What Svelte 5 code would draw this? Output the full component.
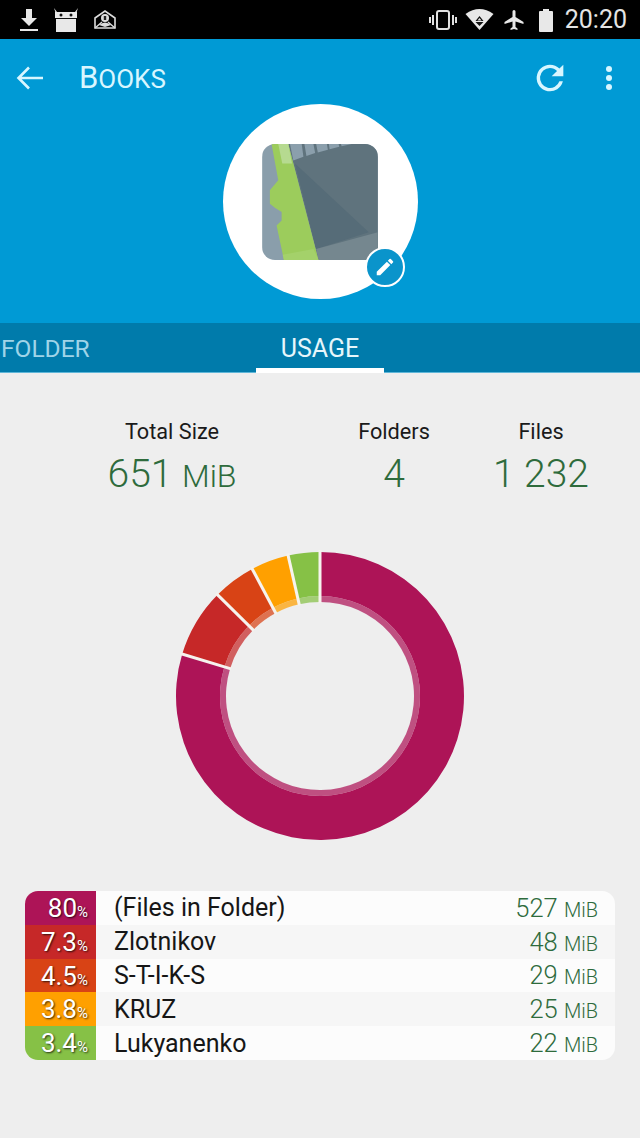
<script>
  const rows = [
    { pct: '80', arc: 0.797, name: '(Files in Folder)', size: '527', color: '#ad1457' },
    { pct: '7.3', arc: 0.077, name: 'Zlotnikov', size: '48', color: '#c62828' },
    { pct: '4.5', arc: 0.048, name: 'S-T-I-K-S', size: '29', color: '#d84315' },
    { pct: '3.8', arc: 0.0425, name: 'KRUZ', size: '25', color: '#ffa000' },
    { pct: '3.4', arc: 0.0355, name: 'Lukyanenko', size: '22', color: '#86c146' }
  ];

  const stats = [
    { label: 'Total Size', value: '651', unit: 'MiB' },
    { label: 'Folders', value: '4' },
    { label: 'Files', value: '1 232' }
  ];

  const CX = 150;
  const CY = 150;

  function coords(r, frac) {
    const a = frac * Math.PI * 2 - Math.PI / 2;
    return [(CX + r * Math.cos(a)).toFixed(2), (CY + r * Math.sin(a)).toFixed(2)];
  }

  function wedge(r0, r1, from, to) {
    const large = to - from > 0.5 ? 1 : 0;
    const a = coords(r1, from).join(' ');
    const b = coords(r1, to).join(' ');
    const c = coords(r0, to).join(' ');
    const d = coords(r0, from).join(' ');
    return `M${a} A${r1} ${r1} 0 ${large} 1 ${b} L${c} A${r0} ${r0} 0 ${large} 0 ${d} Z`;
  }

  let cum = 0;
  const segments = rows.map((row) => {
    const from = cum;
    cum += row.arc;
    return { color: row.color, from, to: cum, a: coords(93, from), b: coords(146, from) };
  });
</script>

<div class="page">
  <div class="status">
    <div class="status-left">
      <svg width="20" height="24" viewBox="0 0 20 24"><path d="M7 1h6v9h5l-8 8-8-8h5z" fill="#e8e8e8"/><rect x="1" y="21" width="18" height="2" fill="#e8e8e8"/></svg>
      <svg width="26" height="26" viewBox="0 0 26 26"><path d="M1 1l3 4h18l3-4-2 6v18H3V7z" fill="#e8e8e8"/><rect x="2" y="5" width="22" height="6" fill="#e8e8e8"/><circle cx="8" cy="8" r="1.5" fill="#111"/><circle cx="18" cy="8" r="1.5" fill="#111"/><rect x="3" y="11" width="20" height="1" fill="#111"/></svg>
      <svg width="24" height="22" viewBox="0 0 24 22"><path d="M2 9l10-7 10 7v10H2z" fill="none" stroke="#ddd" stroke-width="1.6"/><path d="M2 19l7-6M22 19l-7-6" stroke="#ddd" stroke-width="1.4"/><circle cx="12" cy="9" r="4" fill="#ddd"/><rect x="10.8" y="7" width="2.4" height="4" fill="#222"/><path d="M6 16q6-5 12 0l-6 2z" fill="#ddd"/></svg>
    </div>
    <div class="status-right">
      <svg width="28" height="22" viewBox="0 0 28 22"><rect x="8" y="2" width="12" height="18" rx="2" fill="none" stroke="#e0e0e0" stroke-width="2"/><path d="M4 6v10M1 8v6M24 6v10M27 8v6" stroke="#e0e0e0" stroke-width="2"/></svg>
      <svg width="29" height="22" viewBox="0 0 28 22"><path d="M0 5q14-10 28 0L14 21z" fill="#e8e8e8"/><path d="M14 7l-4 5h8zM10 13h8l-4 4z" fill="#111"/><path d="M14 9l-2 2.500h4z" fill="#e8e8e8"/></svg>
      <svg width="24" height="24" viewBox="0 0 24 24"><path d="M21 16v-2l-8-5V3.500a1.500 1.500 0 0 0-3 0V9l-8 5v2l8-2.500V19l-2 1.500V22l3.500-1 3.500 1v-1.500L13 19v-5.500z" fill="#e8e8e8" transform="translate(0.500 0)"/></svg>
      <svg class="battery" width="16" height="24" viewBox="0 0 16 24"><path d="M5 1h6v2h3a1 1 0 0 1 1 1v19a1 1 0 0 1-1 1H2a1 1 0 0 1-1-1V4a1 1 0 0 1 1-1h3z" fill="#e8e8e8"/></svg>
      <span class="time">20:20</span>
    </div>
  </div>

  <header class="hero">
    <div class="toolbar">
      <svg class="back" width="28" height="28" viewBox="0 0 28 28"><path d="M27 14H3M13 3.500L2.500 14 13 24.500" fill="none" stroke="#d8f6ff" stroke-width="2.600"/></svg>
      <h1>Books</h1>
      <svg class="refresh" width="40" height="40" viewBox="0 0 24 24"><path d="M17.650 6.350A8 8 0 0 0 12 4a8 8 0 1 0 7.730 10h-2.080A6 6 0 1 1 12 6c1.660 0 3.140.69 4.220 1.780L13 11h7V4z" fill="#d8f6ff"/></svg>
      <svg width="8" height="26" viewBox="0 0 8 26"><circle cx="4" cy="4" r="3" fill="#d8f6ff"/><circle cx="4" cy="13" r="3" fill="#d8f6ff"/><circle cx="4" cy="22" r="3" fill="#d8f6ff"/></svg>
    </div>
    <div class="avatar">
      <svg class="cover" width="116" height="116" viewBox="157 132 345 346">
        <rect x="157" y="132" width="345" height="346" fill="#8a9eab"/>
        <path d="M235 132H502V478H325z" fill="#5f737d"/>
        <path d="M255 190L475 395L318 445z" fill="#566c78"/>
        <path d="M318 445L502 395V478H325z" fill="#75878f"/>
        <path d="M240 132h35l5 38-30 11zM283 132h27l5 27-26 9zM318 132h32l3 17-30 8zM356 132h29l2 8-29 8zM392 132h32l-30 7z" fill="#8b9fac"/>
        <path d="M185 132H235L325 478H222L200 375L215 360V335L195 322L180 310V270L205 240z" fill="#9ccc5c"/>
        <path d="M205 132H235L246 190H217z" fill="#b6da90"/>
        <path d="M222 478L218 462L310 445L325 478z" fill="#a4d16a"/>
      </svg>
      <div class="edit">
        <svg width="22" height="22" viewBox="0 0 24 24"><path d="M3 17.250V21h3.750L17.810 9.940l-3.750-3.750zM20.710 7.040a1 1 0 0 0 0-1.410l-2.340-2.340a1 1 0 0 0-1.410 0l-1.830 1.830 3.750 3.750z" fill="#fff"/></svg>
      </div>
    </div>
  </header>

  <nav class="tabs">
    <div class="tab dim">FOLDER</div>
    <div class="tab active">USAGE</div>
  </nav>

  <main class="content">
    <section class="stats">
      {#each stats as stat}
        <div class="stat">
          <div class="stat-label">{stat.label}</div>
          <div class="stat-value">{stat.value}{#if stat.unit}{' '}<span class="stat-unit">{stat.unit}</span>{/if}</div>
        </div>
      {/each}
    </section>

    <svg class="donut" width="300" height="300" viewBox="0 0 300 300">
      {#each segments as seg}
        <path d={wedge(100, 144, seg.from, seg.to)} fill={seg.color} />
        <path d={wedge(94, 100, seg.from, seg.to)} fill={seg.color} opacity="0.72" />
      {/each}
      {#each segments as seg}
        <line x1={seg.a[0]} y1={seg.a[1]} x2={seg.b[0]} y2={seg.b[1]} stroke="#f6f3ee" stroke-width="3" />
      {/each}
    </svg>

    <section class="legend">
      {#each rows as row}
        <div class="row">
          <div class="swatch" style="background: {row.color}">{row.pct}<small>%</small></div>
          <div class="name">{row.name}</div>
          <div class="size">{row.size} <small>MiB</small></div>
        </div>
      {/each}
    </section>
  </main>
</div>

<style>
  :global(body) {
    margin: 0;
    background: #eeeeee;
  }

  .page {
    width: 640px;
    height: 1138px;
    overflow: hidden;
    display: flex;
    flex-direction: column;
    font-family: Roboto, "Liberation Sans", sans-serif;
    background: #eeeeee;
  }

  .status {
    height: 39px;
    flex: none;
    background: #000;
    display: flex;
    align-items: center;
    justify-content: space-between;
    padding: 0 13px 0 19px;
    box-sizing: border-box;
  }

  .status-left,
  .status-right {
    display: flex;
    align-items: center;
  }

  .status-left {
    gap: 14px;
  }

  .status-right {
    gap: 8px;
  }

  .battery {
    margin-left: 4px;
  }

  .time {
    font-size: 25px;
    color: #e4e4e4;
    margin-left: 3px;
  }

  .hero {
    height: 284px;
    flex: none;
    background: #009ad5;
    display: flex;
    flex-direction: column;
    align-items: center;
  }

  .toolbar {
    width: 100%;
    height: 65px;
    flex: none;
    box-sizing: border-box;
    padding: 12px 27px 0 16px;
    display: flex;
    align-items: center;
  }

  h1 {
    margin: 0 0 0 35px;
    flex: 1;
    font-size: 26px;
    font-weight: 400;
    text-transform: uppercase;
    color: #d8f6ff;
  }

  h1::first-letter {
    font-size: 31px;
  }

  .refresh {
    margin-right: 35px;
  }

  .avatar {
    width: 195px;
    height: 195px;
    border-radius: 50%;
    background: #fff;
    position: relative;
    display: flex;
    align-items: center;
    justify-content: center;
  }

  .cover {
    border-radius: 13px;
  }

  .edit {
    position: absolute;
    left: 142px;
    top: 143px;
    width: 36px;
    height: 36px;
    border: 2px solid #fff;
    border-radius: 50%;
    background: #0a94cb;
    display: flex;
    align-items: center;
    justify-content: center;
  }

  .tabs {
    height: 50px;
    flex: none;
    box-sizing: border-box;
    background: #007bab;
    border-bottom: 1px solid #5fb6d8;
    display: flex;
  }

  .tab {
    font-size: 25px;
    line-height: 51px;
    height: 50px;
    box-sizing: border-box;
    text-align: center;
  }

  .tab.dim {
    width: 256px;
    padding-left: 1px;
    text-align: left;
    font-size: 24.500px;
    color: #9fd4e8;
  }

  .tab.active {
    width: 128px;
    color: #e6f6fb;
    border-bottom: 5px solid #fff;
  }

  .content {
    flex: 1;
    display: flex;
    flex-direction: column;
    align-items: center;
  }

  .stats {
    width: 100%;
    margin-top: 45px;
    display: grid;
    grid-template-columns: 344px 100px 194px;
  }

  .stat {
    text-align: center;
  }

  .stat-label {
    font-size: 21.700px;
    line-height: 28px;
    color: #1a1a1a;
  }

  .stat-value {
    font-size: 39px;
    font-weight: 300;
    line-height: 46px;
    margin-top: 5px;
    color: #2e6b3c;
  }

  .stat-unit {
    font-size: 32px;
  }

  .donut {
    margin-top: 47px;
    flex: none;
  }

  .legend {
    width: 590px;
    margin-top: 45px;
    border-radius: 13px;
    overflow: hidden;
    background: #fcfcfc;
  }

  .row {
    height: 33.800px;
    display: flex;
    align-items: center;
  }

  .row:nth-child(even) {
    background: #f6f6f6;
  }

  .swatch {
    width: 71px;
    height: 100%;
    flex: none;
    box-sizing: border-box;
    padding-right: 8px;
    text-align: right;
    font-size: 26px;
    line-height: 34px;
    color: #fff;
    text-shadow: 1px 1px 2px rgba(0, 0, 0, 0.75);
  }

  .swatch small {
    font-size: 15px;
  }

  .name {
    flex: 1;
    margin-left: 18px;
    font-size: 25px;
    color: #161616;
  }

  .size {
    margin-right: 17px;
    font-size: 25.500px;
    font-weight: 300;
    color: #2e6b3c;
  }

  .size small {
    font-size: 20px;
  }
</style>
